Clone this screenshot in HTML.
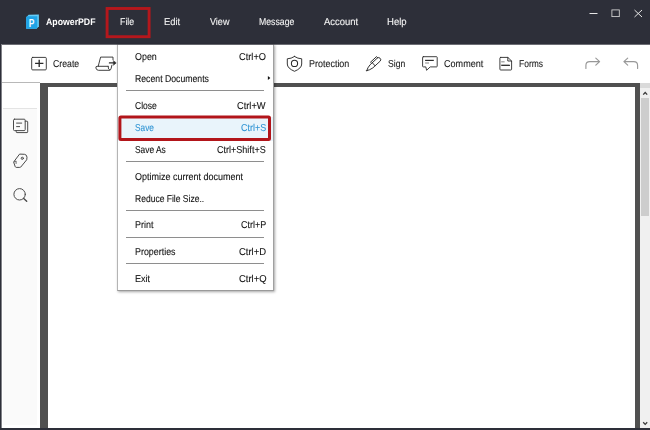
<!DOCTYPE html>
<html><head><meta charset="utf-8">
<style>
*{box-sizing:border-box;margin:0;padding:0}
html,body{width:650px;height:430px;overflow:hidden;background:#2d2f39;font-family:"Liberation Sans",sans-serif;}
#app{position:relative;width:650px;height:430px;background:#2d2f39;overflow:hidden}
.abs{position:absolute}
.t{position:absolute;display:inline-block;text-rendering:geometricPrecision;-webkit-text-stroke:0.1px currentColor;white-space:nowrap;line-height:20px;transform-origin:0 50%}
#title{left:0;top:0;width:650px;height:44px;background:#2d2f39}
#toolbar{left:2px;top:44px;width:648px;height:39px;background:#fff}
#left{left:2px;top:83px;width:38px;height:345px;background:#fff}
#doc{left:40px;top:83px;width:600px;height:345px;background:#505050}
#page{left:48px;top:87px;width:587px;height:341px;background:#fff}
#sb{left:640px;top:83px;width:10px;height:345px;background:#f0f0f0}
#thumb{left:641px;top:98px;width:8px;height:118px;background:#cdcdcd}
#menu{left:117px;top:44px;width:157px;height:247px;background:#fff;border:1px solid #b4b4b4;border-top-color:#e0e0e0;border-right-color:#a0a0a0;border-bottom-color:#9a9a9a;box-shadow:1px 1px 2.5px rgba(0,0,0,.35)}
.sep{position:absolute;left:126px;width:138px;height:1px;background:#8e8e8e}
#ov{left:0;top:0}
</style></head><body>
<div id="app">
<div id="title" class="abs"></div>
<div id="toolbar" class="abs"></div>
<div id="left" class="abs">
  <div class="abs" style="left:0;top:-1px;width:38px;height:1px;background:#b8b8b8"></div>
  <div class="abs" style="left:0;top:0;width:38px;height:25px;background:#fff"></div>
  <div class="abs" style="left:1px;top:25px;width:34px;height:317px;background:#fafafa;border-top:1px solid #e4e4e4"></div>
</div>
<div id="doc" class="abs"></div>
<div id="page" class="abs"></div>
<div id="sb" class="abs"><div class="abs" style="left:0;top:0;width:10px;height:5px;background:#dadada"></div></div>
<div id="thumb" class="abs"></div>
<div id="menu" class="abs">
  <div class="abs" style="left:0;top:72px;width:155px;height:24px;background:#e9f4fb"></div>
</div>
<div class="sep" style="top:90px"></div>
<div class="sep" style="top:161px"></div>
<div class="sep" style="top:210px"></div>
<div class="sep" style="top:237px"></div>
<div class="sep" style="top:263px"></div>
<svg id="ov" class="abs" width="650" height="430" viewBox="0 0 650 430">
  <!-- logo -->
  <g transform="translate(20,8)">
    <path d="M8.600 6.800 L18.900 6.500 L18.900 18.300 L16.600 20.700 L6.200 20.700 L6.200 9.600 Z" fill="#63cbf6"/>
    <path d="M6.200 9.700 Q6.200 8.300 7.600 8.300 L17.300 8.300 L17.300 19.300 Q17.300 20.700 15.900 20.700 L6.200 20.700 Z" fill="#1fa3e6"/>
    <text x="0" y="0" transform="translate(8.700,18.600) scale(0.800,1)" font-family="Liberation Sans, sans-serif" font-weight="bold" font-size="10.500" fill="#f4fbff">P</text>
  </g>
  <!-- window controls -->
  <g stroke="#e6e6e6" stroke-width="1" fill="none">
    <path d="M589.500 13.500 H597.500"/>
    <rect x="611.900" y="9.900" width="7.400" height="6.700" stroke-width="0.850" stroke="#d8d8d8"/>
    <path d="M634.500 10 L642 17 M642 10 L634.500 17"/>
  </g>
  <!-- File red box -->
  <rect x="107.100" y="8.500" width="42" height="28.200" fill="none" stroke="#b5171c" stroke-width="2.900"/>
  <!-- toolbar icons -->
  <g stroke="#2b2b2b" fill="none" stroke-width="0.900" stroke-linejoin="round" stroke-linecap="round">
    <rect x="31.700" y="57.400" width="14.600" height="12.500" rx="1"/>
    <path d="M39.200 59.700 V67.100 M35.100 63.400 H43.400" stroke-width="1.350" stroke-linecap="butt"/>
    <!-- scroll/export -->
    <path d="M113 59.800 V57.100 H100.600 L98.200 66.300"/>
    <path d="M108.100 66.300 H97.200 Q95.500 66.300 95.900 68 Q96.400 70.300 98.500 70.300 H109.200 Q110.800 70.300 111.200 68.200 L111.900 65.200"/>
    <path d="M108.100 66.300 Q108 69.600 109.700 70.200"/>
    <path d="M109.400 62.900 H114.500" stroke-width="1.200"/>
    <path d="M113.700 60.900 L116.200 62.900 L113.700 65 Z" fill="#2b2b2b" stroke-width="0.600"/>
    <!-- shield -->
    <path d="M294.500 56.500 Q297.800 58.700 301.700 58.800 V64 Q301.700 68.300 294.500 71.300 Q287.300 68.300 287.300 64 V58.800 Q291.200 58.700 294.500 56.500 Z" stroke-width="0.950"/>
    <circle cx="294.500" cy="63.400" r="3.100" stroke-width="1.050"/>
    <!-- pen -->
    <g transform="translate(366.700,70.700) rotate(-42.600)">
      <path d="M0 0 Q2.500 -1.600 6.500 -2.100 H16.200 Q18.300 -2.100 18.300 0 Q18.300 2.100 16.200 2.100 H6.500 Q2.500 1.600 0 0 Z"/>
      <path d="M9.500 -2.100 V2.100"/>
      <path d="M8.500 -3.700 H16.800 V-2.100"/>
    </g>
    <!-- comment -->
    <path d="M423.300 56.700 H436.500 Q437.200 56.700 437.200 57.400 V66.200 Q437.200 66.900 436.500 66.900 H430.200 L426.600 70.300 L425.800 66.900 H423.300 Q422.600 66.900 422.600 66.200 V57.400 Q422.600 56.700 423.300 56.700 Z"/>
    <path d="M425.100 60.400 H433.800" stroke-width="1.200" stroke-linecap="butt"/>
    <path d="M425.100 63 H429" stroke="#9a9a9a" stroke-width="1.200" stroke-linecap="butt"/>
    <!-- forms -->
    <path d="M500.700 57.400 H507.800 L511.600 61 V69.200 Q511.600 70 510.800 70 H500.700 Q499.900 70 499.900 69.200 V58.200 Q499.900 57.400 500.700 57.400 Z"/>
    <path d="M507.800 57.400 V61 H511.600"/>
    <path d="M501.200 61.800 H504.600" stroke="#9a9a9a" stroke-width="1.200" stroke-linecap="butt"/>
    <path d="M501.200 65.300 H509.900" stroke-width="1.300" stroke-linecap="butt"/>
  </g>
  <!-- redo / undo -->
  <g stroke="#989898" fill="none" stroke-width="1.150" stroke-linecap="round" stroke-linejoin="round">
    <path d="M585.900 68.500 V65.500 Q585.900 61.600 589.800 61.600 H599.400 M595.800 58.100 L599.600 61.600 L595.800 65.200"/>
    <path d="M637.600 68.500 V65.500 Q637.600 61.600 633.700 61.600 H624.100 M627.700 58.100 L623.900 61.600 L627.700 65.200"/>
  </g>
  <!-- left panel icons -->
  <g stroke="#4a4a4a" fill="none" stroke-width="1" stroke-linejoin="round" stroke-linecap="round">
    <path d="M25.200 121.200 H27 Q27.700 121.200 27.700 121.900 V131.900 Q27.700 132.600 27 132.600 H16.900 Q16.200 132.600 16.200 131.900 V130.600"/>
    <rect x="13.500" y="119.200" width="11.700" height="11.400" rx="1"/>
    <path d="M16.200 123.100 H22.100 M16.200 126.600 H20" stroke-linecap="butt"/>
    <!-- tag -->
    <path d="M20 154.100 L24.500 154.300 Q26.800 154.600 27 157.200 L26.700 159.800 L20.800 167 Q20.400 167.400 19.800 167.400 L16.200 167.400 Q15.500 167.300 15.200 166.600 L13.800 162.600 Q13.600 162 14 161.500 Z"/>
    <circle cx="22.300" cy="158.300" r="1.100"/>
    <path d="M13.900 162 L16.100 161 L16.100 163.500" stroke-width="0.800"/>
    <!-- search -->
    <circle cx="19.600" cy="194.300" r="5.700"/>
    <path d="M23.700 198.400 L26.700 201.300" stroke-width="1.400"/>
  </g>
  <!-- scrollbar arrows -->
  <g stroke="#3a3a3a" fill="none" stroke-width="1.300">
    <path d="M643.200 94.600 L645.200 92.500 L647.200 94.600"/>
    <path d="M643.200 422.300 L645.200 424.400 L647.200 422.300"/>
  </g>
  <!-- submenu arrow -->
  <path d="M267.900 75.900 L270.300 78 L267.900 80.100 Z" fill="#111"/>
  <!-- Save red box -->
  <rect x="119.900" y="117.100" width="149.600" height="22.400" rx="1" fill="none" stroke="#b2151a" stroke-width="3"/>
</svg>
<div id="tx" class="abs" style="left:0;top:0;width:650px;height:430px;will-change:transform">
<span id="t_app" class="t" style="left:46.12px;top:13px;font-size:9.6px;color:#ffffff;font-weight:bold;-webkit-text-stroke:0;transform:scaleX(0.9105)">ApowerPDF</span>
<span id="t_file" class="t" style="left:120.25px;top:13px;font-size:10px;color:#f4f4f4;font-weight:normal;transform:scaleX(0.8800)">File</span>
<span id="t_edit" class="t" style="left:163.55px;top:13px;font-size:10px;color:#f4f4f4;font-weight:normal;transform:scaleX(0.9358)">Edit</span>
<span id="t_view" class="t" style="left:209.62px;top:13px;font-size:10px;color:#f4f4f4;font-weight:normal;transform:scaleX(0.9023)">View</span>
<span id="t_msg" class="t" style="left:258.58px;top:13px;font-size:10px;color:#f4f4f4;font-weight:normal;transform:scaleX(0.8703)">Message</span>
<span id="t_acc" class="t" style="left:324.38px;top:13px;font-size:10px;color:#f4f4f4;font-weight:normal;transform:scaleX(0.9449)">Account</span>
<span id="t_help" class="t" style="left:386.68px;top:13px;font-size:10px;color:#f4f4f4;font-weight:normal;transform:scaleX(0.9568)">Help</span>
<span id="t_create" class="t" style="left:52.51px;top:55px;font-size:10px;color:#1a1a1a;font-weight:normal;transform:scaleX(0.8739)">Create</span>
<span id="t_prot" class="t" style="left:309.11px;top:55px;font-size:10px;color:#1a1a1a;font-weight:normal;transform:scaleX(0.8957)">Protection</span>
<span id="t_sign" class="t" style="left:388.25px;top:55px;font-size:10px;color:#1a1a1a;font-weight:normal;transform:scaleX(0.8605)">Sign</span>
<span id="t_comm" class="t" style="left:443.76px;top:55px;font-size:10px;color:#1a1a1a;font-weight:normal;transform:scaleX(0.9064)">Comment</span>
<span id="t_forms" class="t" style="left:518.77px;top:55px;font-size:10px;color:#1a1a1a;font-weight:normal;transform:scaleX(0.8464)">Forms</span>
<span id="m_open" class="t" style="left:135.27px;top:48px;font-size:10px;color:#111111;font-weight:normal;transform:scaleX(0.8905)">Open</span>
<span id="m_open2" class="t" style="left:238.96px;top:48px;font-size:10px;color:#111111;font-weight:normal;transform:scaleX(0.9254)">Ctrl+O</span>
<span id="m_recent" class="t" style="left:134.60px;top:70px;font-size:10px;color:#111111;font-weight:normal;transform:scaleX(0.8696)">Recent Documents</span>
<span id="m_close" class="t" style="left:135.18px;top:97px;font-size:10px;color:#111111;font-weight:normal;transform:scaleX(0.8528)">Close</span>
<span id="m_close2" class="t" style="left:237.36px;top:97px;font-size:10px;color:#111111;font-weight:normal;transform:scaleX(0.9260)">Ctrl+W</span>
<span id="m_save" class="t" style="left:135.49px;top:119px;font-size:10px;color:#2f93d3;font-weight:normal;transform:scaleX(0.8294)">Save</span>
<span id="m_save2" class="t" style="left:241.05px;top:119px;font-size:10px;color:#2f93d3;font-weight:normal;transform:scaleX(0.8962)">Ctrl+S</span>
<span id="m_saveas" class="t" style="left:135.47px;top:141px;font-size:10px;color:#111111;font-weight:normal;transform:scaleX(0.8400)">Save As</span>
<span id="m_saveas2" class="t" style="left:217.17px;top:141px;font-size:10px;color:#111111;font-weight:normal;transform:scaleX(0.9032)">Ctrl+Shift+S</span>
<span id="m_opt" class="t" style="left:135.20px;top:168px;font-size:10px;color:#111111;font-weight:normal;transform:scaleX(0.8994)">Optimize current document</span>
<span id="m_red" class="t" style="left:135.13px;top:190px;font-size:10px;color:#111111;font-weight:normal;transform:scaleX(0.8523)">Reduce File Size..</span>
<span id="m_print" class="t" style="left:135.02px;top:216px;font-size:10px;color:#111111;font-weight:normal;transform:scaleX(0.8939)">Print</span>
<span id="m_print2" class="t" style="left:241.05px;top:216px;font-size:10px;color:#111111;font-weight:normal;transform:scaleX(0.8966)">Ctrl+P</span>
<span id="m_prop" class="t" style="left:135.00px;top:243px;font-size:10px;color:#111111;font-weight:normal;transform:scaleX(0.8901)">Properties</span>
<span id="m_prop2" class="t" style="left:238.92px;top:243px;font-size:10px;color:#111111;font-weight:normal;transform:scaleX(0.9467)">Ctrl+D</span>
<span id="m_exit" class="t" style="left:134.83px;top:270px;font-size:10px;color:#111111;font-weight:normal;transform:scaleX(0.9075)">Exit</span>
<span id="m_exit2" class="t" style="left:238.93px;top:270px;font-size:10px;color:#111111;font-weight:normal;transform:scaleX(0.9466)">Ctrl+Q</span>
</div>
<div class="abs" style="left:0;top:44px;width:650px;height:1px;background:rgba(45,47,57,.7)"></div>
<div class="abs" style="left:1px;top:44px;width:1px;height:384px;background:rgba(255,255,255,.4)"></div>
<div class="abs" style="left:0;top:428px;width:650px;height:2px;background:#2d2f39"></div>
</div>
</body></html>
